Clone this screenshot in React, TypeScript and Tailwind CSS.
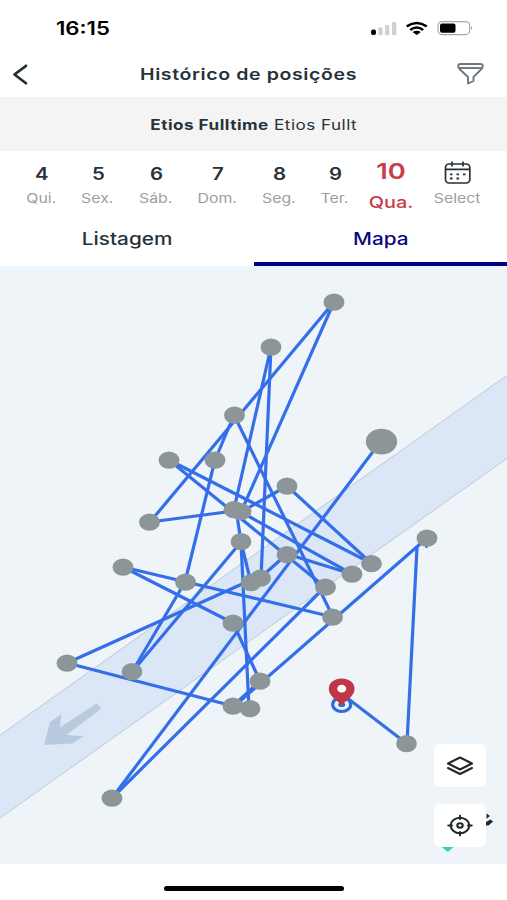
import React from "react";

type Point = [number, number];

const days = [
  { n: "4", d: "Qui.", w: "w-[58px]" },
  { n: "5", d: "Sex.", w: "w-[55px]" },
  { n: "6", d: "Sáb.", w: "w-[61px]" },
  { n: "7", d: "Dom.", w: "w-[62px]" },
  { n: "8", d: "Seg.", w: "w-[61px]" },
  { n: "9", d: "Ter.", w: "w-[51px]" },
];

const segments: [Point, Point][] = [
  [[334, 302], [150, 522]],
  [[334, 302], [241, 512]],
  [[271, 347], [234, 509]],
  [[271, 347], [261, 578]],
  [[234, 415], [215, 460]],
  [[215, 460], [185, 582]],
  [[234, 415], [333, 617]],
  [[169, 460], [371, 563]],
  [[169, 460], [325, 587]],
  [[241, 512], [352, 574]],
  [[287, 554], [352, 574]],
  [[150, 522], [234, 511]],
  [[241, 512], [287, 486]],
  [[287, 486], [371, 563]],
  [[236, 509], [241, 542]],
  [[241, 542], [251, 583]],
  [[241, 542], [249, 709]],
  [[241, 542], [132, 672]],
  [[185, 582], [132, 672]],
  [[251, 580], [67, 663]],
  [[260, 578], [287, 554]],
  [[123, 567], [333, 617]],
  [[123, 567], [233, 623]],
  [[233, 623], [260, 681]],
  [[67, 663], [233, 706]],
  [[233, 706], [260, 681]],
  [[239, 702], [427, 538]],
  [[112, 798], [381, 441]],
  [[112, 798], [325, 587]],
  [[417, 547], [407, 743]],
  [[342, 694], [406, 743]],
];

const stops: Point[] = [
  [334, 302], [271, 347], [234.5, 415], [169, 460], [215, 460], [149.5, 522],
  [234, 509.500], [241, 511.500], [287, 486], [241, 541.500], [287, 554.500], [185.500, 582],
  [123, 567], [251, 582.500], [260.500, 578], [325.500, 587], [352, 574], [371.500, 563.500],
  [332.500, 617], [233, 623], [67, 663], [132, 671.500], [260, 681], [233, 706],
  [250, 708.500], [112, 798], [406.500, 743.500], [427, 538],
];

function RouteMap() {
  return (
    <svg className="block h-[598px] w-full" viewBox="0 266 507 598">
      <path d="M-2 736.5 509 374V457L-2 819.5Z" fill="#dbe6f6" stroke="#bfc9d5" strokeWidth="1" />
      <path d="M96.500 703.500 101.300 708.500 66.500 735 84 736 72.500 743.500 44 745 50 722 61.500 714 59.800 727.500Z" fill="#b9cade" />
      <g stroke="#346fe9" strokeWidth="3.200">
        {segments.map(([a, b], i) => (
          <line key={i} x1={a[0]} y1={a[1]} x2={b[0]} y2={b[1]} />
        ))}
      </g>
      <circle cx="426.500" cy="546.500" r="1.500" fill="#346fe9" />
      <g fill="#8c9699">
        {stops.map(([x, y], i) => (
          <ellipse key={i} cx={x} cy={y + 0.2} rx="10.400" ry="8.600" />
        ))}
        <ellipse cx="381.500" cy="441.600" rx="15.700" ry="12.900" />
      </g>
      <ellipse cx="341.700" cy="704.500" rx="9" ry="7" fill="#eef4f8" stroke="#2f6be0" strokeWidth="3.200" />
      <ellipse cx="341.700" cy="704.800" rx="3.600" ry="2.300" fill="#2f6be0" />
      <path d="M341.700 705.500C339 701.500 328.800 697 328.800 688.800 328.800 682.500 334.500 678.400 341.700 678.400S354.600 682.500 354.600 688.800C354.600 697 344.400 701.500 341.700 705.500Z" fill="#c03848" />
      <ellipse cx="341.700" cy="688.700" rx="4.500" ry="3.900" fill="#fff" />
      <path d="M486.500 813.500 490 816 486.500 818.800ZM486 822 490.500 819.500 493 821.500 488.500 825.500 486 825.500Z" fill="#20282b" />
      <path d="M441 846.500H454L448 852Z" fill="#35cdbb" />
    </svg>
  );
}

function StatusIcons() {
  return (
    <svg className="h-[18px] w-[106px]" viewBox="369 20 106 18">
      <rect x="371" y="29.500" width="5" height="5.500" rx="2" fill="#000" />
      <g fill="#d0d0d0">
        <rect x="378.300" y="27.500" width="4.300" height="7.500" rx="1" />
        <rect x="385" y="25" width="4.300" height="10" rx="1" />
        <rect x="392" y="22" width="4.300" height="13" rx="1" />
      </g>
      <g fill="none" stroke="#000" strokeWidth="2.600">
        <path d="M406.700 26.300Q416.700 19.700 426.700 26.300" />
        <path d="M410.200 30Q416.700 25 423.200 30" />
      </g>
      <path d="M412.500 32Q416.700 29.500 420.900 32L416.700 35Z" fill="#000" />
      <rect x="438" y="21.600" width="31.600" height="13" rx="4" fill="none" stroke="#a9a9a9" strokeWidth="1.200" />
      <rect x="440" y="23.500" width="15.500" height="9.300" rx="2" fill="#000" />
      <path d="M471 26.300Q473.300 28.100 471 30.200Z" fill="#a0a0a0" />
    </svg>
  );
}

export default function App() {
  return (
    <div className="flex h-[900px] w-[507px] flex-col overflow-hidden bg-white font-['Inter',sans-serif] text-[#27323a]">
      <div className="flex h-[50px] shrink-0 items-start justify-between pr-[32px] pl-[56px]">
        <span className="mt-[16px] origin-left scale-x-[1.230] text-[18px] leading-[25px] font-semibold text-black">16:15</span>
        <div className="mt-[20px] flex"><StatusIcons /></div>
      </div>

      <header className="flex h-[47px] shrink-0 items-center justify-between pr-[22px] pl-[12px]">
        <svg className="h-[24px] w-[28px]" viewBox="12 62 28 24" fill="none">
          <path d="M26 65.800 14.500 74.500 26 83.300" stroke="#242e33" strokeWidth="2.700" strokeLinecap="round" strokeLinejoin="round" />
        </svg>
        <h1 className="scale-x-[1.220] pl-[0.5px] text-[16px] leading-6 font-semibold tracking-[0.5px] whitespace-nowrap">Histórico de posições</h1>
        <svg className="h-[24px] w-[28px]" viewBox="457 62 28 24" fill="none" stroke="#6d777c" strokeWidth="1.900" strokeLinejoin="round">
          <path d="M460.500 64H480.500C483.500 64 483.500 67.500 481 69.500L473.500 77V81L468 83.500V77L460 69.500C457.500 67.500 457.500 64 460.500 64Z" />
          <path d="M459 68H482" />
        </svg>
      </header>

      <div className="flex h-[54px] shrink-0 items-center justify-center bg-[#f4f4f4] pt-px">
        <span className="scale-x-[1.220] text-[14px] leading-5 tracking-[0.400px] whitespace-nowrap"><b className="font-bold">Etios Fulltime</b> Etios Fullt</span>
      </div>

      <div className="flex h-[64px] shrink-0 pl-[12px]">
        {days.map((day) => (
          <div key={day.n} className={"flex flex-col items-center pt-[11px] " + day.w}>
            <span className="scale-x-[1.200] pl-px text-[17px] leading-6 font-semibold">{day.n}</span>
            <span className="mt-[3px] scale-x-[1.220] text-[13px] leading-[18px] text-[#999fa1]">{day.d}</span>
          </div>
        ))}
        <div className="flex w-[62px] flex-col items-center pt-[5px] text-[#c93c49]">
          <span className="scale-x-[1.240] text-[22px] leading-[30px] font-semibold">10</span>
          <span className="mt-[4px] scale-x-[1.240] text-[16px] leading-6 font-medium">Qua.</span>
        </div>
        <div className="flex w-[71px] flex-col items-center pt-[9px]">
          <svg className="h-[26px] w-[28px]" viewBox="444 160 28 26" fill="none" stroke="#273035" strokeWidth="1.700">
            <rect x="445.500" y="164" width="24.300" height="19" rx="3.500" />
            <path d="M445.500 169.300H470M452 161.500V166.500M463 161.500V166.500" />
            <path d="M450 174.300H452.500M456.500 174.300H459M463 174.300H465.500M450 178.500H452.500M456.500 178.500H459" strokeWidth="1.800" />
          </svg>
          <span className="mt-[3px] scale-x-[1.220] text-[13px] leading-[18px] text-[#999fa1]">Select</span>
        </div>
      </div>

      <nav className="grid h-[51px] shrink-0 grid-cols-2 text-[17px] leading-6 font-medium">
        <div className="flex justify-center pt-[12px]"><span className="scale-x-[1.220]">Listagem</span></div>
        <div className="flex justify-center border-b-4 border-[#000080] pt-[12px] text-[#09097d]"><span className="scale-x-[1.220]">Mapa</span></div>
      </nav>

      <main className="relative h-[598px] shrink-0 bg-[#eef4f8]">
        <RouteMap />
        <div className="absolute right-[21px] bottom-[17px] flex flex-col gap-[17px]">
          <button className="flex h-[43px] w-[52px] items-center justify-center rounded-md bg-white">
            <svg className="h-[24px] w-[30px]" viewBox="445 754 30 24" fill="none" stroke="#22292c" strokeWidth="2.100" strokeLinejoin="round" strokeLinecap="round">
              <path d="M460 757.500 472 763.500 460 769.500 448 763.500Z" />
              <path d="M448 768 460 774 472 768" />
            </svg>
          </button>
          <button className="flex h-[43px] w-[52px] items-center justify-center rounded-md bg-white">
            <svg className="h-[24px] w-[28px]" viewBox="446 814 28 24" fill="none" stroke="#22292c" strokeWidth="2.100" strokeLinecap="round">
              <ellipse cx="460" cy="825.500" rx="9.300" ry="7.800" />
              <ellipse cx="460" cy="825.500" rx="2.700" ry="2.200" />
              <path d="M460 815.800V819M460 832V835.200M448.300 825.500H452M468 825.500H471.700" />
            </svg>
          </button>
        </div>
      </main>

      <footer className="flex flex-1 justify-center pt-[22px]">
        <div className="h-[5px] w-[180px] rounded-full bg-black" />
      </footer>
    </div>
  );
}
